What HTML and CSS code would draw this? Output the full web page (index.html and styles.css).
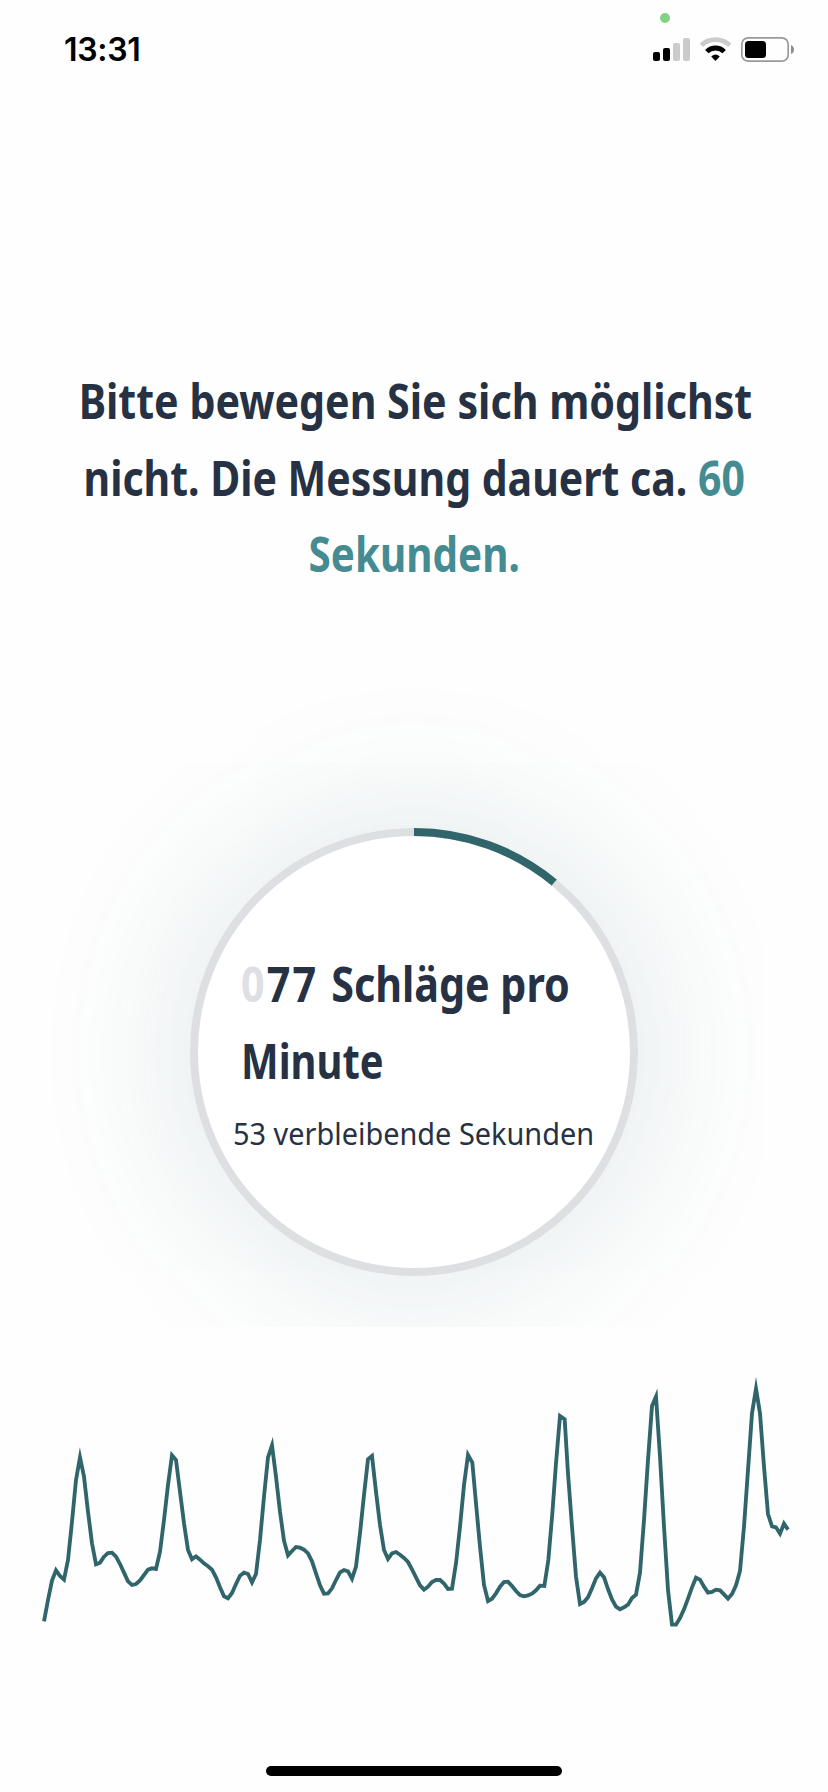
FILE: index.html
```html
<!DOCTYPE html>
<html lang="de">
<head>
<meta charset="utf-8">
<title>Messung</title>
<link rel="stylesheet" href="styles.css">
</head>
<body>
<div class="screen">
  <header class="status">
    <time class="clock">13:31</time>
    <svg class="status-icons" viewBox="650 0 150 80" aria-hidden="true">
      <circle cx="665" cy="18" r="5" fill="#7fd286"/>
      <rect x="653" y="52" width="7" height="9" rx="2"/>
      <rect x="663" y="48" width="7" height="13" rx="2"/>
      <g fill="#cbcbcb">
        <rect x="673" y="43" width="7" height="18" rx="2"/>
        <rect x="683" y="38" width="7" height="23" rx="2"/>
      </g>
      <g fill="none" stroke-width="4.8">
        <path d="M701.3 45.3A20.6 20.6 0 0 1 729.7 45.3" stroke="#cbcbcb"/>
        <path d="M706.8 51.6A12.3 12.3 0 0 1 724.2 51.6" stroke="#000"/>
      </g>
      <path d="M711.2 56.6Q715.5 52.4 719.8 56.6L715.5 61Z"/>
      <rect x="741.8" y="37.8" width="46.4" height="23.4" rx="6.5" fill="none" stroke="#999" stroke-width="1.7"/>
      <rect x="745" y="41" width="21" height="17" rx="3.5"/>
      <path d="M791 45Q794 46.5 794 49.5T791 54Z" fill="#8c8c8c"/>
    </svg>
  </header>

  <h1 class="instruction">
    <span class="line line-a">Bitte bewegen Sie sich möglichst</span>
    <span class="line line-b">nicht. Die Messung dauert ca. <em class="accent">60</em></span>
    <span class="line line-c accent">Sekunden.</span>
  </h1>

  <section class="measure">
    <div class="dial">
      <svg class="ring" viewBox="0 0 448 448" aria-hidden="true">
        <circle class="ring-track" cx="224" cy="224" r="220"/>
        <circle class="ring-value" cx="224" cy="224" r="220" pathLength="100" transform="rotate(-90 224 224)"/>
      </svg>
      <div class="reading">
        <p class="bpm"><span class="line bpm-a"><span class="digits"><span class="pad">0</span>77 </span>Schläge pro</span><span class="line bpm-b">Minute</span></p>
        <p class="remaining">53 verbleibende Sekunden</p>
      </div>
    </div>
  </section>

  <svg class="pulse" viewBox="0 0 2310 810" aria-hidden="true">
    <polyline points="42,754 54,690 66,632 78,601 90,618 102,629 114,570 126,455 138,330 150,262 162,320 174,425 186,520 198,583 210,578 222,560 234,549 246,548 258,560 270,582 282,608 294,634 306,645 318,642 330,631 342,615 354,599 366,595 378,597 390,545 402,450 414,345 426,256 438,270 450,365 462,460 474,540 486,568 498,559 510,569 522,580 534,589 546,599 558,622 570,652 582,679 594,685
    606,669 618,642 630,617 642,608 654,612 666,637 678,612 690,510 702,380 714,262 726,226 738,320 750,425 762,512 774,556 786,543 798,531 810,533 822,539 834,550 846,574 858,610 870,646 882,671 894,670 906,655 918,630 930,607 942,600 954,604 966,626 978,590 990,490 1002,375 1014,268 1026,258 1038,365 1050,465 1062,540 1074,567 1086,550 1098,546 1110,554 1122,564 1134,576 1146,598 1158,622 1170,646
    1182,659 1194,650 1206,636 1218,630 1230,630 1242,641 1254,657 1266,656 1278,580 1290,470 1302,345 1314,255 1327,278 1338,400 1350,530 1362,645 1374,693 1386,686 1398,670 1410,650 1422,636 1434,635 1446,648 1458,663 1470,675 1482,679 1494,676 1506,671 1518,661 1530,647 1543,648 1555,570 1567,430 1578,280 1590,138 1604,148 1614,310 1626,470 1638,620 1650,702 1662,696 1674,682 1686,655 1698,625 1710,608
    1722,622 1734,657 1746,688 1758,710 1770,718 1782,712 1794,704 1806,684 1818,674 1830,608 1842,450 1854,270 1866,108 1878,80 1890,260 1902,470 1914,660 1926,764 1938,764 1950,744 1962,718 1974,686 1986,652 1998,623 2010,629 2022,650 2034,668 2046,666 2058,659 2070,661 2082,673 2094,686 2106,672 2118,646 2130,603 2142,470 2154,300 2166,130 2178,56 2190,130 2202,290 2214,432 2226,469 2238,472 2250,491 2262,461 2274,479"/>
  </svg>

  <div class="home-indicator"></div>
</div>
</body>
</html>
```
FILE: styles.css
```css
* { box-sizing: border-box; }

body {
  margin: 0;
  background: #fefefe;
  color: #263143;
  font-family: "Noto Sans", "Open Sans", sans-serif;
}

.screen {
  display: flex;
  flex-direction: column;
  width: 828px;
  height: 1792px;
  overflow: hidden;
}

.status {
  display: flex;
  justify-content: space-between;
  height: 80px;
  padding: 0 28px 0 64px;
}

.clock {
  padding-top: 30px;
  color: #000;
  font: 600 32px/39px Inter, sans-serif;
  letter-spacing: -0.3px;
}

.status-icons { width: 150px; height: 80px; }

.instruction {
  display: flex;
  flex-direction: column;
  align-items: center;
  margin: 283px 0 0;
  font-size: 47.5px;
  font-weight: 700;
  line-height: 76.5px;
}

.line {
  display: block;
  white-space: nowrap;
}

.line-a { transform: translateX(1px) scaleX(0.867); }
.line-b { transform: scaleX(0.863); }
.line-c { transform: scaleX(0.851); }

.accent { color: #458b92; font-style: normal; }

/* The glow is cut off at the bottom edge of this section */
.measure {
  display: flex;
  justify-content: center;
  height: 734px;
  padding-top: 235.5px;
  overflow: hidden;
}

.dial {
  display: grid;
  width: 448px;
  height: 448px;
  border-radius: 50%;
  background: #fff;
  box-shadow: 0 0 160px rgba(47, 101, 110, 0.155);
}

.ring, .reading { grid-area: 1 / 1; }
.ring { width: 448px; height: 448px; }
.ring circle { fill: none; stroke-width: 8; }
.ring .ring-track { stroke: #dedfe3; }
.ring .ring-value { stroke: #2f656b; stroke-dasharray: 11 89; }

.reading { padding: 118px 0 0 51px; }

.bpm {
  margin: 0;
  font-size: 47.5px;
  font-weight: 700;
  line-height: 76.5px;
}

.bpm .line, .remaining { width: max-content; transform-origin: left; }
.bpm-a { transform: scaleX(0.868); }
.bpm-b { transform: scaleX(0.84); }
.digits { letter-spacing: 2.5px; }
.pad { color: #dedfe3; }

.remaining {
  margin: 8px 0 0 -8px;
  font-size: 31.5px;
  line-height: 51px;
  white-space: nowrap;
  transform: scaleX(0.917);
}

.pulse {
  width: 770px;
  height: 270px;
  margin: 43px 0 0 30px;
}

.pulse polyline {
  fill: none;
  stroke: #2f656b;
  stroke-width: 11.5;
  stroke-miterlimit: 10;
}

.home-indicator {
  width: 296px;
  height: 10px;
  margin: auto auto 16px;
  border-radius: 5px;
  background: #000;
}
```
